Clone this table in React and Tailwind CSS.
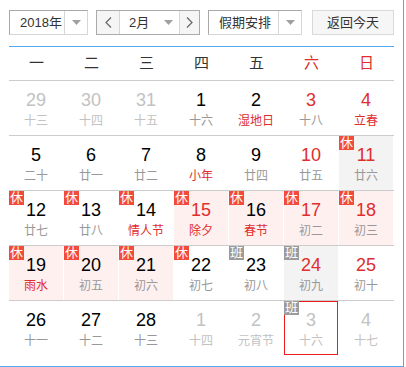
import React from "react"

const RED = "text-[#e02d2d]"

const rows = [
    [
        { d: 29, l: "十三", other: true },
        { d: 30, l: "十四", other: true },
        { d: 31, l: "十五", other: true },
        { d: 1, l: "十六" },
        { d: 2, l: "湿地日", fest: true },
        { d: 3, l: "十八", red: true },
        { d: 4, l: "立春", red: true, fest: true },
    ],
    [
        { d: 5, l: "二十" },
        { d: 6, l: "廿一" },
        { d: 7, l: "廿二" },
        { d: 8, l: "小年", fest: true },
        { d: 9, l: "廿四" },
        { d: 10, l: "廿五", red: true },
        { d: 11, l: "廿六", red: true, badge: "休", bg: "gray" },
    ],
    [
        { d: 12, l: "廿七", badge: "休" },
        { d: 13, l: "廿八", badge: "休" },
        { d: 14, l: "情人节", fest: true, badge: "休" },
        { d: 15, l: "除夕", red: true, fest: true, badge: "休", bg: "pink" },
        { d: 16, l: "春节", fest: true, badge: "休", bg: "pink" },
        { d: 17, l: "初二", red: true, badge: "休", bg: "pink" },
        { d: 18, l: "初三", red: true, badge: "休", bg: "pink" },
    ],
    [
        { d: 19, l: "雨水", fest: true, badge: "休", bg: "pink" },
        { d: 20, l: "初五", badge: "休", bg: "pink" },
        { d: 21, l: "初六", badge: "休", bg: "pink" },
        { d: 22, l: "初七", badge: "休" },
        { d: 23, l: "初八", badge: "班" },
        { d: 24, l: "初九", red: true, badge: "班", bg: "gray" },
        { d: 25, l: "初十", red: true },
    ],
    [
        { d: 26, l: "十一" },
        { d: 27, l: "十二" },
        { d: 28, l: "十三" },
        { d: 1, l: "十四", other: true },
        { d: 2, l: "元宵节", other: true },
        { d: 3, l: "十六", other: true, badge: "班", selected: true },
        { d: 4, l: "十七", other: true },
    ],
]

const weekdays = ["一", "二", "三", "四", "五", "六", "日"]

const Arrow = () => (
    <svg width="9" height="5" viewBox="0 0 9 5">
        <path d="M0 0 L9 0 L4.5 5 Z" fill="#a0a0a0" />
    </svg>
)

const Chevron = ({ dir }) => (
    <svg width="7" height="11" viewBox="0 0 7 11">
        <path d={dir === "left" ? "M6 0.5 L1 5.5 L6 10.5" : "M1 0.5 L6 5.5 L1 10.5"} fill="none" stroke="#666" strokeWidth="1.2" />
    </svg>
)

const Cell = ({ c }) => {
    let numColor = "text-black"
    if (c.other) numColor = "text-[#c2c2c2]"
    else if (c.red) numColor = RED
    let lunarColor = "text-[#999]"
    if (c.other) lunarColor = "text-[#c2c2c2]"
    else if (c.fest) lunarColor = RED
    let bg = "bg-white"
    if (c.bg === "pink") bg = "bg-[#fff0f0]"
    if (c.bg === "gray") bg = "bg-[#f3f3f3]"

    return (
        <div className="w-[55px] h-[54px] pr-px">
            <div className={`relative h-full flex flex-col items-center pt-[8px] ${bg} ${c.selected ? "border border-[#e81c1c]" : ""}`}>
                {c.badge && (
                    <div className={`absolute ${c.selected ? "-left-px -top-px" : "left-0 top-0"} w-[15px] h-[14px] text-[13px] leading-[14px] text-white text-center ${c.badge === "休" ? "bg-[#f24a3b]" : "bg-[#9b9b9b]"}`}>
                        {c.badge}
                    </div>
                )}
                <div className={`text-[18px] leading-[22px] ${numColor} ${c.selected ? "-mt-px" : ""}`}>{c.d}</div>
                <div className={`text-[12px] leading-[16px] mt-[2px] whitespace-nowrap ${lunarColor}`}>{c.l}</div>
            </div>
        </div>
    )
}

const App = () => {
    return (
        <div
            className="w-[404px] h-[367px] bg-white border-r border-b border-[#56a6f0] pl-[9px] pt-[10px] text-[#333]"
            style={{ fontFamily: '"Liberation Sans", "Noto Sans CJK SC", sans-serif' }}
        >
            <div className="flex h-[25px] w-[385px] text-[13px] leading-[23px] whitespace-nowrap">
                <div className="w-[79px] flex border border-t-[#a9a9a9] border-l-[#a9a9a9] border-r-[#d6d6d6] border-b-[#d6d6d6]">
                    <div className="w-[54px] pl-[10px]">2018年</div>
                    <div className="flex-1 border-l border-[#d6d6d6] flex items-center justify-center"><Arrow /></div>
                </div>
                <div className="w-[104px] ml-[8px] flex border border-[#aaa]">
                    <div className="w-[23px] bg-[#f5f5f5] border-r border-[#d6d6d6] flex items-center justify-center"><Chevron dir="left" /></div>
                    <div className="w-[59px] flex items-center pl-[9px] pr-[6px] justify-between">
                        <span>2月</span>
                        <Arrow />
                    </div>
                    <div className="flex-1 bg-[#f5f5f5] border-l border-[#d6d6d6] flex items-center justify-center"><Chevron dir="right" /></div>
                </div>
                <div className="w-[94px] ml-[8px] flex border border-t-[#a9a9a9] border-l-[#a9a9a9] border-r-[#d6d6d6] border-b-[#d6d6d6]">
                    <div className="w-[69px] pl-[10px]">假期安排</div>
                    <div className="flex-1 border-l border-[#d6d6d6] flex items-center justify-center"><Arrow /></div>
                </div>
                <button className="w-[82px] ml-[10px] bg-[#f6f6f6] border border-[#d9d9d9] text-[13px] leading-[23px] text-[#333]">返回今天</button>
            </div>

            <div className="w-[385px] h-px bg-[#56a6f0] mt-[11px]" />

            <div className="flex w-[385px] h-[33px] items-center">
                {weekdays.map((w, i) => (
                    <div key={w} className={`w-[55px] text-center text-[15px] ${i > 4 ? RED : "text-[#333]"}`}>{w}</div>
                ))}
            </div>

            {rows.map((row, ri) => (
                <div key={ri} className="flex w-[385px] border-t border-[#cccccc]">
                    {row.map((c, ci) => <Cell key={ci} c={c} />)}
                </div>
            ))}
        </div>
    )
}

export default App
